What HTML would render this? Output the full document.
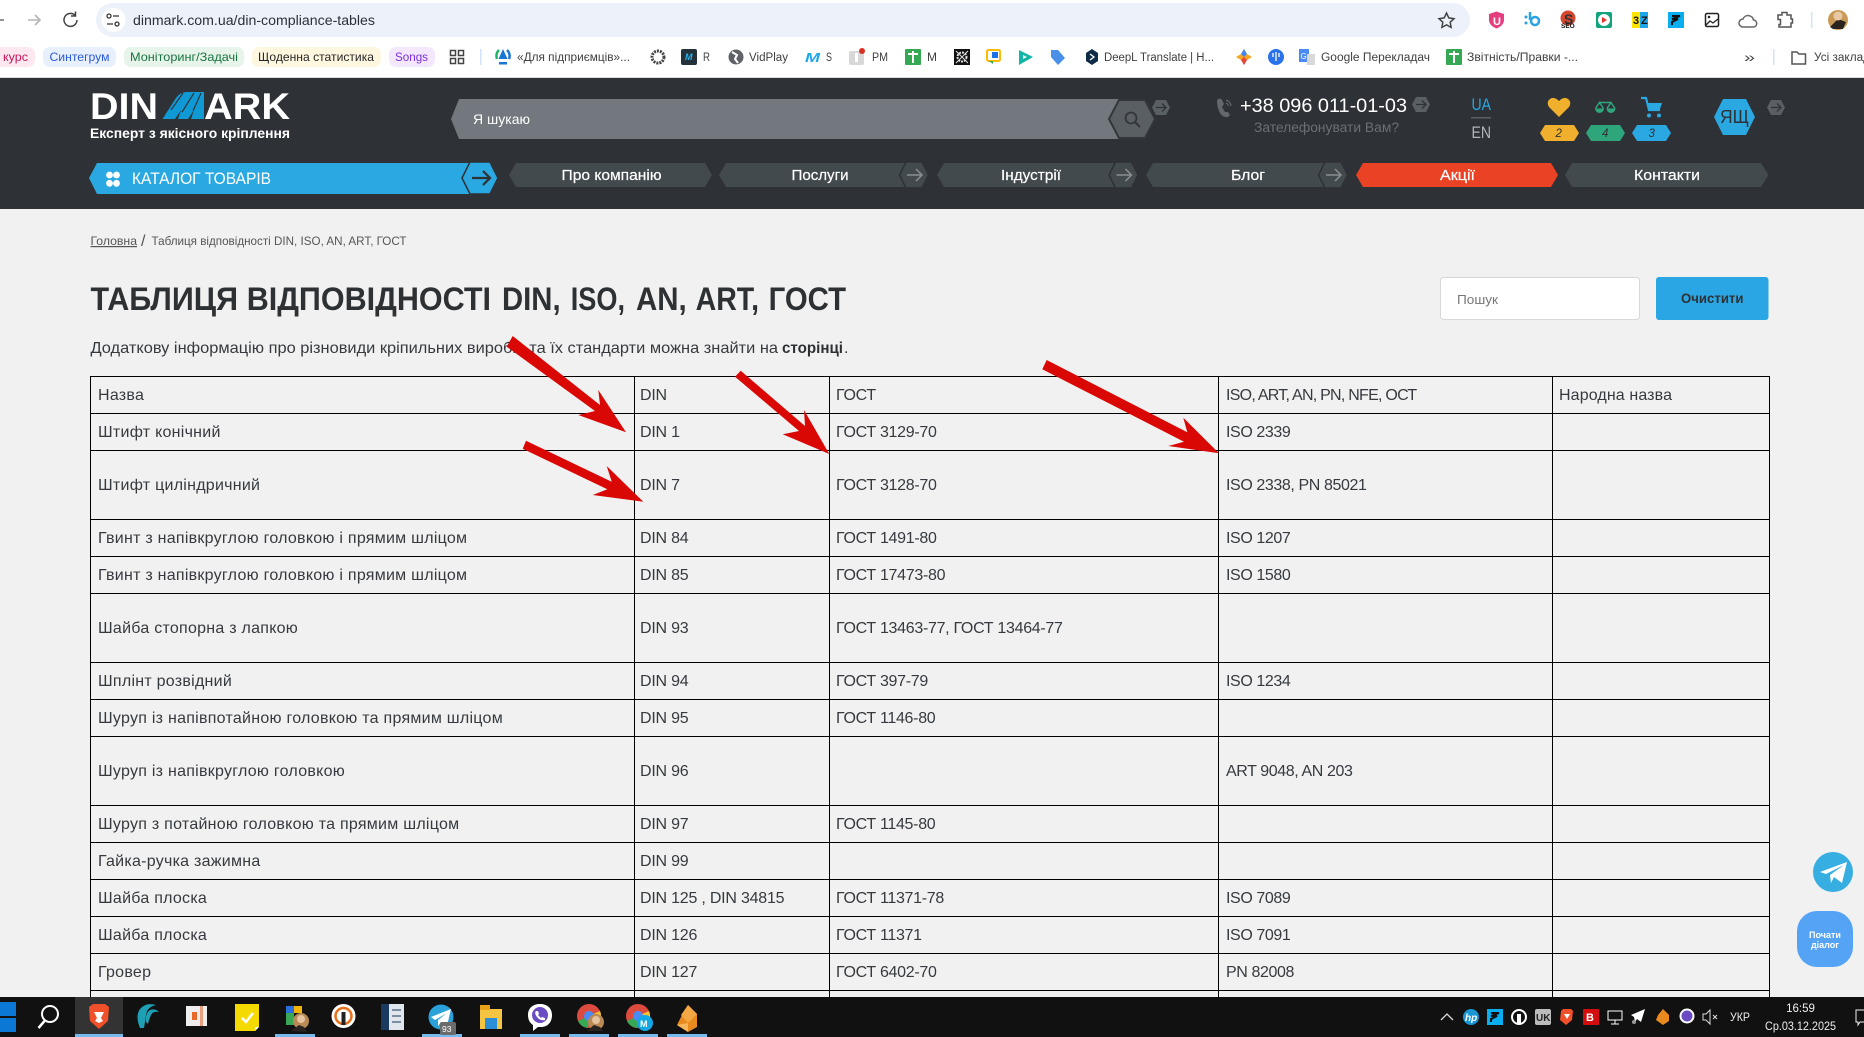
<!DOCTYPE html>
<html lang="uk"><head><meta charset="utf-8"><title>DINMARK — Таблиця відповідності</title>
<style>
html,body{margin:0;padding:0;background:#f1f1f1}
body{width:1864px;height:1037px;overflow:hidden;position:relative;font-family:"Liberation Sans","Noto Sans CJK SC",sans-serif}
svg text{font-family:"Liberation Sans","Noto Sans CJK SC",sans-serif}
#top{position:absolute;left:0;top:0;z-index:1}
#ov{position:absolute;left:0;top:0;z-index:5;pointer-events:none}
table{position:absolute;left:90px;top:376px;width:1679px;border-collapse:collapse;table-layout:fixed;z-index:2;color:#363a3f;font-size:16px}
td{border:1px solid #000;padding:1px 0 0 7px;vertical-align:middle;white-space:nowrap;overflow:hidden}
td:nth-child(1){letter-spacing:.26px}
td:nth-child(2){letter-spacing:-.22px;padding-left:5px}
td:nth-child(3){letter-spacing:-.3px;padding-left:6px}
td:nth-child(4){letter-spacing:-.4px}
td:nth-child(5){letter-spacing:.12px;padding-left:6px}
tr:first-child td:nth-child(4){letter-spacing:-.75px}
tr{height:37px}tr.t{height:69px}
</style></head><body>
<svg id="top" width="1864" height="1037" viewBox="0 0 1864 1037">
<rect width="1864" height="1037" fill="#f1f1f1"/>
<rect width="1864" height="78" fill="#fff"/>
<rect y="77" width="1864" height="1" fill="#dcdcdc"/>
<rect y="78" width="1864" height="131" fill="#2e3135"/>
<!-- toolbar -->
<path d="M0 20H4" stroke="#777" stroke-width="1.6"/>
<path d="M28 20H40M35 15l5 5-5 5" stroke="#b5b5b5" stroke-width="1.6" fill="none"/>
<path d="M77 20a6.500 6.500 0 1 1-2-4.800M75.500 11.500v4.500h-4.500" stroke="#444" stroke-width="1.500" fill="none"/>
<rect x="96" y="3" width="1374" height="34" rx="17" fill="#edf2fa"/>
<circle cx="113.500" cy="20" r="12" fill="#fff"/>
<circle cx="109" cy="16" r="2" fill="none" stroke="#333" stroke-width="1.300"/><path d="M113 16h6M107 24h6" stroke="#333" stroke-width="1.300"/><circle cx="117" cy="24" r="2" fill="none" stroke="#333" stroke-width="1.300"/>
<text x="133" y="25" font-size="13.500" fill="#2d3136" textLength="242" lengthAdjust="spacingAndGlyphs">dinmark.com.ua/din-compliance-tables</text>
<path d="M1446.500 13l2.300 4.900 5.200.700-3.800 3.600.900 5.200-4.600-2.500-4.600 2.500.900-5.200-3.800-3.600 5.200-.700z" fill="none" stroke="#444" stroke-width="1.500"/>
<path d="M1489 14l7.500-2.500 7.500 2.500v6c0 4-3.500 7-7.500 8.500-4-1.500-7.500-4.500-7.500-8.500z" fill="#e4407f"/><text x="1493" y="25" font-size="11" font-weight="700" fill="#fff">U</text>
<circle cx="1526" cy="17" r="1.500" fill="#2aa3e0"/><circle cx="1526" cy="23" r="1.500" fill="#2aa3e0"/><path d="M1530 12v8" stroke="#2aa3e0" stroke-width="2.500"/><circle cx="1535" cy="21" r="4" fill="none" stroke="#2aa3e0" stroke-width="2.500"/>
<circle cx="1568" cy="18" r="7.500" fill="#d5462f"/><text x="1564" y="24" font-size="14" font-weight="700" fill="#333">S</text><text x="1561" y="28" font-size="6.500" font-weight="700" fill="#111">SEO</text>
<rect x="1596" y="12" width="16" height="16" rx="2" fill="#12a37e"/><circle cx="1604" cy="20" r="6" fill="#fff"/><path d="M1602 17l5 3-5 3z" fill="#e3342b"/>
<rect x="1632" y="12" width="8" height="16" fill="#ffe500"/><rect x="1640" y="12" width="8" height="16" fill="#1ca8e8"/><text x="1633" y="24" font-size="11" font-weight="700" fill="#111">3</text><text x="1641" y="24" font-size="11" font-weight="700" fill="#111">Z</text>
<rect x="1668" y="12" width="16" height="16" fill="#08aef0"/><path d="M1672 16h8l-8 3h6l-6 3v3" stroke="#111" stroke-width="2" fill="none"/>
<rect x="1705.500" y="13.500" width="13" height="13" rx="1.500" fill="none" stroke="#222" stroke-width="1.500"/><circle cx="1709" cy="17" r="1.300" fill="#222"/><path d="M1706 25l4-4 3 2 5-4" stroke="#222" fill="none" stroke-width="1.300"/>
<path d="M1743 27h10a3.500 3.500 0 0 0 .5-7 5.500 5.500 0 0 0-10.500-1 4 4 0 0 0 0 8z" fill="none" stroke="#666" stroke-width="1.500"/>
<path d="M1778 15h4v-2.500h5v2.500h4v4h1.500v4h-1.500v4h-12v-2.500h1.500v-5h-2.500z" fill="none" stroke="#555" stroke-width="1.500"/>
<rect x="1811" y="12" width="1.500" height="16" fill="#d3e3fd"/>
<circle cx="1838" cy="20" r="10" fill="#c89a55"/><path d="M1830 27l8-8 8 3-3 7h-10z" fill="#2a2420"/><circle cx="1838" cy="16" r="4.500" fill="#e9c8a6"/>
<!-- bookmarks -->
<g font-size="12">
<rect x="-8" y="47" width="43" height="20" rx="7" fill="#fde8f0"/><text x="3" y="61" fill="#c2185b" textLength="25" lengthAdjust="spacingAndGlyphs">курс</text>
<rect x="43" y="47" width="73" height="20" rx="7" fill="#e8f0fe"/><text x="49.500" y="61" fill="#2a5bd7" textLength="60" lengthAdjust="spacingAndGlyphs">Синтегрум</text>
<rect x="124" y="47" width="120" height="20" rx="7" fill="#e6f4ea"/><text x="130" y="61" fill="#1a7340" textLength="108" lengthAdjust="spacingAndGlyphs">Моніторинг/Задачі</text>
<rect x="252" y="47" width="129" height="20" rx="7" fill="#fef7e0"/><text x="258" y="61" fill="#262626" textLength="116" lengthAdjust="spacingAndGlyphs">Щоденна статистика</text>
<rect x="389" y="47" width="46" height="20" rx="7" fill="#f3e8fd"/><text x="395" y="61" fill="#7b30d8" textLength="33" lengthAdjust="spacingAndGlyphs">Songs</text>
<g fill="none" stroke="#444" stroke-width="1.500"><rect x="450.500" y="50.500" width="5" height="5"/><rect x="458.500" y="50.500" width="5" height="5"/><rect x="450.500" y="58.500" width="5" height="5"/><rect x="458.500" y="58.500" width="5" height="5"/></g>
<rect x="480" y="49" width="1.500" height="16" fill="#d3e3fd"/>
<path d="M499 50a8 8 0 0 0-2 9" stroke="#21b36b" stroke-width="2.500" fill="none"/><path d="M507 50a8 8 0 0 1 2 9" stroke="#1976d2" stroke-width="2.500" fill="none"/><path d="M503 49l4.500 10h-9z" fill="#1976d2"/><rect x="499" y="62" width="8" height="2.500" fill="#1976d2"/>
<g fill="#3f3f3f" font-size="11.500">
<text x="517" y="61" textLength="113" lengthAdjust="spacingAndGlyphs">«Для підприємців»...</text>
<circle cx="658" cy="57" r="6" fill="none" stroke="#444" stroke-width="3" stroke-dasharray="2 1"/>
<rect x="681" y="49" width="16" height="16" rx="2" fill="#24303a"/><text x="685" y="60" font-size="9" fill="#2ab4e8" font-weight="700" font-style="italic">M</text>
<text x="703" y="61" textLength="7" lengthAdjust="spacingAndGlyphs">R</text>
<circle cx="736" cy="57" r="7.500" fill="#5f6368"/><path d="M732 52l5 3-2 4 3 4" stroke="#fff" stroke-width="2" fill="none"/>
<text x="749" y="61" textLength="39" lengthAdjust="spacingAndGlyphs">VidPlay</text>
<text x="805" y="62" font-size="13" fill="#1ea7e4" font-weight="700" font-style="italic" textLength="15" lengthAdjust="spacingAndGlyphs">M</text>
<text x="826" y="61" textLength="6" lengthAdjust="spacingAndGlyphs">S</text>
<rect x="849" y="51" width="15" height="14" rx="2" fill="#d8d8d8"/><rect x="855" y="53" width="3" height="9" fill="#fff"/><circle cx="862" cy="51" r="3" fill="#d93025"/>
<text x="872" y="61" textLength="16" lengthAdjust="spacingAndGlyphs">PM</text>
<rect x="905" y="49" width="16" height="16" rx="1" fill="#34a853"/><path d="M913 51v12M908 54h10" stroke="#fff" stroke-width="2"/>
<text x="927" y="61" textLength="10" lengthAdjust="spacingAndGlyphs">M</text>
<rect x="954" y="49" width="16" height="16" fill="#111"/><circle cx="962" cy="57" r="4.500" fill="none" stroke="#ddd" stroke-width="2" stroke-dasharray="2 1"/><path d="M956 51l12 12M968 51l-12 12" stroke="#ddd"/>
<rect x="987" y="50" width="13" height="11" rx="1.500" fill="none" stroke="#fbbc04" stroke-width="2"/><path d="M989 61h4v3z" fill="#34a853"/><rect x="992" y="52" width="6" height="6" fill="#1a73e8"/>
<path d="M1019 50l14 7-14 8z" fill="#13b5a6"/><path d="M1023 55l4 2-4 2z" fill="#fff"/>
<path d="M1051 50h7l7 8-7 7-7-8z" fill="#4a90e8"/>
<path d="M1092 49l6 4v8l-6 4-6-4v-8z" fill="#0f2b46"/><path d="M1090 54l4 3-4 3" stroke="#fff" stroke-width="1.300" fill="none"/>
<text x="1104" y="61" textLength="110" lengthAdjust="spacingAndGlyphs">DeepL Translate | Н...</text>
<path d="M1244 49l3 5 5 3-5 3-3 5-3-5-5-3 5-3z" fill="#f6a623"/><path d="M1244 49l3 5-3 3-3-3z" fill="#4285f4"/><path d="M1244 65l3-5-3-3-3 3z" fill="#e8453c"/>
<circle cx="1276" cy="57" r="8" fill="#2b73ea"/><path d="M1273 53v4M1276 52v9M1279 53v4" stroke="#fff" stroke-width="1.300"/>
<rect x="1299" y="49" width="10" height="13" fill="#4a8af4"/><text x="1300.500" y="59" font-size="8" fill="#fff">G</text><path d="M1307 54h8v11h-8z" fill="#d9d9d9"/>
<text x="1321" y="61" textLength="109" lengthAdjust="spacingAndGlyphs">Google Перекладач</text>
<rect x="1446" y="49" width="16" height="16" rx="1" fill="#34a853"/><path d="M1454 51v12M1449 54h10" stroke="#fff" stroke-width="2"/>
<text x="1467" y="61" textLength="111" lengthAdjust="spacingAndGlyphs">Звітність/Правки -...</text>
<text x="1744" y="62" font-size="14" fill="#444" textLength="11" lengthAdjust="spacingAndGlyphs">»</text>
<rect x="1773" y="49" width="1.500" height="16" fill="#d3e3fd"/>
<path d="M1792 52h5l2 2h6.500v10h-13.500z" fill="none" stroke="#555" stroke-width="1.500"/>
<text x="1814" y="61" textLength="56" lengthAdjust="spacingAndGlyphs">Усі заклад</text>
</g></g>
<!-- logo -->
<g fill="#fff" font-weight="700">
<text x="90" y="119" font-size="37" textLength="68" lengthAdjust="spacingAndGlyphs">DIN</text>
<text x="204" y="119" font-size="37" textLength="86" lengthAdjust="spacingAndGlyphs">ARK</text>
<text x="90" y="138" font-size="14" textLength="200" lengthAdjust="spacingAndGlyphs">Експерт з якісного кріплення</text>
</g>
<path d="M162.500 119L176 98q4-6 11-6h17v27h-13l3-9-6 9h-10l3-9-6 9z" fill="#0f9ad6"/>
<path d="M171 110l12-17M182 112l12-19M193 111l8-18" stroke="#2e3135" stroke-width="1.200" fill="none"/>
<!-- search -->
<polygon points="451,119 459,99 1122,99 1122,139 459,139" fill="#72787e"/>
<text x="473" y="124" font-size="14" fill="#fff" textLength="57" lengthAdjust="spacingAndGlyphs">Я шукаю</text>
<polygon points="1109,119 1119,100 1145,100 1155,119 1145,138 1119,138" fill="#5a5f63" stroke="#33363a" stroke-width="2"/>
<circle cx="1131" cy="118" r="5.500" fill="none" stroke="#33363a" stroke-width="1.800"/><path d="M1135 122l5 5" stroke="#33363a" stroke-width="2"/>
<polygon points="1152,107.500 1156,100 1166,100 1170,107.500 1166,115 1156,115" fill="#5a5f63"/><path d="M1156 107.500h10M1162 103.500l4 4-4 4" stroke="#2e3135" stroke-width="1.300" fill="none"/>
<!-- phone -->
<path d="M1217 100q3-3 5 0l2 4-2 3 3 5 3 0 2 3-2 2q-5 1-8-4t-3-13z" fill="#62686c"/><path d="M1226 100a7 7 0 0 1 5 6M1226 103a4 4 0 0 1 2.500 3" stroke="#62686c" stroke-width="1.200" fill="none"/>
<text x="1240" y="112" font-size="19.500" fill="#fff" textLength="167" lengthAdjust="spacingAndGlyphs">+38 096 011-01-03</text>
<polygon points="1412,104.500 1416,97 1426,97 1430,104.500 1426,112 1416,112" fill="#5a5f63"/><path d="M1416 104.500h10M1422 100.500l4 4-4 4" stroke="#2e3135" stroke-width="1.300" fill="none"/>
<text x="1254" y="132" font-size="13.500" fill="#6a7074" textLength="145" lengthAdjust="spacingAndGlyphs">Зателефонувати Вам?</text>
<!-- lang -->
<text x="1471.500" y="110" font-size="17" fill="#2ba6e1" textLength="19.500" lengthAdjust="spacingAndGlyphs">UA</text>
<rect x="1471" y="117" width="20" height="1.500" fill="#5b6064"/>
<text x="1471.500" y="138" font-size="17" fill="#b4b7b9" textLength="19.500" lengthAdjust="spacingAndGlyphs">EN</text>
<!-- fav, compare, cart -->
<path d="M1559 117l-10-10q-3-5 1-8t9 2q5-5 9-2t1 8z" fill="#f0af2c"/>
<polygon points="1540,133 1545,125 1574,125 1579,133 1574,141 1545,141" fill="#f0af2c"/>
<text x="1555.500" y="137" font-size="11.500" font-style="italic" fill="#2e3135">2</text>
<path d="M1595.500 108.500l4-6 4 6M1607 108.500l4-6 4 6M1599.500 102.500h11.500" stroke="#2fa57c" stroke-width="1.500" fill="none"/>
<path d="M1595 108.500h9a4.500 4.500 0 0 1-9 0zM1606.500 108.500h9a4.500 4.500 0 0 1-9 0z" fill="#2fa57c"/>
<polygon points="1586,133 1591,125 1620,125 1625,133 1620,141 1591,141" fill="#2fa57c"/>
<text x="1602" y="137" font-size="11.500" font-style="italic" fill="#2e3135">4</text>
<path d="M1641 98h5l3 12h11" stroke="#2aa8e2" stroke-width="2.200" fill="none"/><path d="M1647 103h15l-2 6h-11z" fill="#2aa8e2"/><circle cx="1649" cy="115.500" r="2" fill="#2aa8e2"/><circle cx="1659" cy="115.500" r="2" fill="#2aa8e2"/>
<polygon points="1632,133 1637,125 1666,125 1671,133 1666,141 1637,141" fill="#2aa8e2"/>
<text x="1648.500" y="137" font-size="11.500" font-style="italic" fill="#2e3135">3</text>
<polygon points="1714,117 1723,99 1746,99 1755,117 1746,135 1723,135" fill="#2aa8e2"/>
<text x="1720" y="123" font-size="18" fill="#2e3135" textLength="29" lengthAdjust="spacingAndGlyphs">ЯЩ</text>
<polygon points="1767,107.500 1771,100 1781,100 1785,107.500 1781,115 1771,115" fill="#5a5f63"/><path d="M1771 107.500h10M1777 103.500l4 4-4 4" stroke="#2e3135" stroke-width="1.300" fill="none"/>
<!-- catalog -->
<polygon points="89,178 97,163 470,163 470,194 97,194" fill="#2aa8e2"/>
<circle cx="109.500" cy="175" r="3.400" fill="#fff"/><circle cx="116.500" cy="175" r="3.400" fill="#fff"/><circle cx="109.500" cy="183.300" r="3.400" fill="#fff"/><circle cx="116.500" cy="183.300" r="3.400" fill="#fff"/>
<text x="132" y="184" font-size="16.500" fill="#fff" textLength="139" lengthAdjust="spacingAndGlyphs">КАТАЛОГ ТОВАРІВ</text>
<polygon points="462,178 470,162 490,162 498,178 490,194 470,194" fill="#2aa8e2" stroke="#2e3135" stroke-width="1.500"/>
<path d="M472 178h18M483 171l7 7-7 7" stroke="#2e3135" stroke-width="2.200" fill="none"/>
<!-- nav -->
<g font-size="14.500" fill="#fff" font-weight="400" text-anchor="middle" stroke="#fff" stroke-width=".2">
<polygon points="509,175 516,163 705,163 712,175 705,187 516,187" fill="#434a4e" stroke="none"/>
<text x="611.500" y="180" textLength="100" lengthAdjust="spacingAndGlyphs">Про компанію</text>
<polygon points="719,175 726,163 906,163 906,187 726,187" fill="#434a4e" stroke="none"/>
<text x="820" y="180" textLength="57" lengthAdjust="spacingAndGlyphs">Послуги</text>
<polygon points="937,175 944,163 1116,163 1116,187 944,187" fill="#434a4e" stroke="none"/>
<text x="1031" y="180" textLength="60" lengthAdjust="spacingAndGlyphs">Індустрії</text>
<polygon points="1146,175 1153,163 1324,163 1324,187 1153,187" fill="#434a4e" stroke="none"/>
<text x="1248" y="180" textLength="34" lengthAdjust="spacingAndGlyphs">Блог</text>
<polygon points="1356,175 1363,163 1551,163 1558,175 1551,187 1363,187" fill="#e94224" stroke="none"/>
<text x="1457.500" y="180" textLength="35" lengthAdjust="spacingAndGlyphs">Акції</text>
<polygon points="1565,175 1572,163 1761,163 1768.500,175 1761,187 1572,187" fill="#434a4e" stroke="none"/>
<text x="1667" y="180" textLength="66" lengthAdjust="spacingAndGlyphs">Контакти</text>
</g>
<g fill="#434a4e" stroke="#2e3135" stroke-width="1.500">
<polygon points="899.500,175 906,162 922,162 928.500,175 922,188 906,188"/>
<polygon points="1109,175 1115.500,162 1131.500,162 1138,175 1131.500,188 1115.500,188"/>
<polygon points="1318.500,175 1325,162 1341,162 1347.500,175 1341,188 1325,188"/>
</g>
<g stroke="#8a8e91" stroke-width="1.500" fill="none">
<path d="M907 175h14M916 169l6 6-6 6"/><path d="M1116.500 175h14M1125.500 169l6 6-6 6"/><path d="M1326 175h14M1335 169l6 6-6 6"/>
</g>
<!-- breadcrumb -->
<text x="90.500" y="245" font-size="12" fill="#555" textLength="46.500" lengthAdjust="spacingAndGlyphs" text-decoration="underline">Головна</text>
<text x="141" y="246" font-size="16" fill="#555">/</text>
<text x="151.500" y="245" font-size="12" fill="#555" textLength="255" lengthAdjust="spacingAndGlyphs">Таблиця відповідності DIN, ISO, AN, ART, ГОСТ</text>
<!-- title -->
<g font-size="32" font-weight="700" fill="#2e3134">
<text x="90.500" y="310" textLength="147.500" lengthAdjust="spacingAndGlyphs">ТАБЛИЦЯ</text>
<text x="246.700" y="310" textLength="244.300" lengthAdjust="spacingAndGlyphs">ВІДПОВІДНОСТІ</text>
<text x="502" y="310" textLength="58.600" lengthAdjust="spacingAndGlyphs">DIN,</text>
<text x="570.700" y="310" textLength="54.300" lengthAdjust="spacingAndGlyphs">ISO,</text>
<text x="636" y="310" textLength="50.700" lengthAdjust="spacingAndGlyphs">AN,</text>
<text x="695.600" y="310" textLength="63.400" lengthAdjust="spacingAndGlyphs">ART,</text>
<text x="768.600" y="310" textLength="77.400" lengthAdjust="spacingAndGlyphs">ГОСТ</text>
</g>
<text x="90.500" y="353" font-size="16" fill="#363a3f" textLength="687.500" lengthAdjust="spacingAndGlyphs">Додаткову інформацію про різновиди кріпильних виробів та їх стандарти можна знайти на</text>
<text x="782" y="353" font-size="16" font-weight="700" fill="#2e3134" textLength="61" lengthAdjust="spacingAndGlyphs">сторінці</text>
<text x="844" y="353" font-size="16" fill="#363a3f">.</text>
<!-- search box -->
<rect x="1440.500" y="277.500" width="199" height="42" rx="3" fill="#fff" stroke="#d8d8d8"/>
<text x="1457" y="304" font-size="13" fill="#777" textLength="41" lengthAdjust="spacingAndGlyphs">Пошук</text>
<rect x="1656" y="277" width="112.500" height="43" rx="3" fill="#2ba6e4"/>
<text x="1681" y="303" font-size="13.500" font-weight="700" fill="#2e3134" textLength="62.500" lengthAdjust="spacingAndGlyphs">Очистити</text>
</svg>

<table>
<colgroup><col style="width:544px"><col style="width:195px"><col style="width:389px"><col style="width:334px"><col style="width:217px"></colgroup>
<tr><td>Назва</td><td>DIN</td><td>ГОСТ</td><td>ISO, ART, AN, PN, NFE, ОСТ</td><td>Народна назва</td></tr>
<tr><td>Штифт конічний</td><td>DIN 1</td><td>ГОСТ 3129-70</td><td>ISO 2339</td><td></td></tr>
<tr class="t"><td>Штифт циліндричний</td><td>DIN 7</td><td>ГОСТ 3128-70</td><td>ISO 2338, PN 85021</td><td></td></tr>
<tr><td>Гвинт з напівкруглою головкою і прямим шліцом</td><td>DIN 84</td><td>ГОСТ 1491-80</td><td>ISO 1207</td><td></td></tr>
<tr><td>Гвинт з напівкруглою головкою і прямим шліцом</td><td>DIN 85</td><td>ГОСТ 17473-80</td><td>ISO 1580</td><td></td></tr>
<tr class="t"><td>Шайба стопорна з лапкою</td><td>DIN 93</td><td>ГОСТ 13463-77, ГОСТ 13464-77</td><td></td><td></td></tr>
<tr><td>Шплінт розвідний</td><td>DIN 94</td><td>ГОСТ 397-79</td><td>ISO 1234</td><td></td></tr>
<tr><td>Шуруп із напівпотайною головкою та прямим шліцом</td><td>DIN 95</td><td>ГОСТ 1146-80</td><td></td><td></td></tr>
<tr class="t"><td>Шуруп із напівкруглою головкою</td><td>DIN 96</td><td></td><td>ART 9048, AN 203</td><td></td></tr>
<tr><td>Шуруп з потайною головкою та прямим шліцом</td><td>DIN 97</td><td>ГОСТ 1145-80</td><td></td><td></td></tr>
<tr><td>Гайка-ручка зажимна</td><td>DIN 99</td><td></td><td></td><td></td></tr>
<tr><td>Шайба плоска</td><td>DIN 125 , DIN 34815</td><td>ГОСТ 11371-78</td><td>ISO 7089</td><td></td></tr>
<tr><td>Шайба плоска</td><td>DIN 126</td><td>ГОСТ 11371</td><td>ISO 7091</td><td></td></tr>
<tr><td>Гровер</td><td>DIN 127</td><td>ГОСТ 6402-70</td><td>PN 82008</td><td></td></tr>
<tr><td></td><td></td><td></td><td></td><td></td></tr>
</table>

<svg id="ov" width="1864" height="1037" viewBox="0 0 1864 1037">
<!-- red arrows -->
<g fill="#d90805">
<polygon points="512.700,336 600,405 598.300,390 626,432.300 578.300,415 595,411 506.700,346.700"/>
<polygon points="740.700,370.700 805,426 804,410 829.300,454 782.700,434.300 799,431 735,376.700"/>
<polygon points="526,440.700 611.700,481.700 606.700,466 643.300,501.700 592.700,495 607.300,489.300 522.700,448.700"/>
<polygon points="1046.700,360 1187.300,432.300 1183.300,417.700 1219,453.300 1168.300,446 1184,441.700 1042.300,369.300"/>
</g>
<!-- floating -->
<circle cx="1833" cy="872" r="20" fill="#37aee2"/>
<path d="M1820 872l27-10-5 21-8-6-3 6-1-8 14-10-18 9z" fill="#fff"/>
<rect x="1797" y="911" width="56" height="56" rx="20" fill="#54a3f5"/>
<text x="1825" y="938" font-size="9" font-weight="700" fill="#fff" text-anchor="middle">Почати</text>
<text x="1825" y="948" font-size="9" font-weight="700" fill="#fff" text-anchor="middle">діалог</text>
<!-- taskbar -->
<rect y="997" width="1864" height="40" fill="#111"/>
<rect x="0" y="1002" width="16" height="14" fill="#0a78d4"/><rect x="0" y="1018" width="16" height="14" fill="#0a78d4"/>
<circle cx="50" cy="1014" r="8" fill="none" stroke="#fff" stroke-width="2"/><path d="M44.500 1021l-6 7" stroke="#fff" stroke-width="2.500"/>
<rect x="75" y="997" width="48" height="40" fill="#333"/>
<g fill="#76b9ed"><rect x="75" y="1034" width="48" height="3"/><rect x="275" y="1034" width="40" height="3"/><rect x="422" y="1034" width="40" height="3"/><rect x="520" y="1034" width="40" height="3"/><rect x="569" y="1034" width="40" height="3"/><rect x="618" y="1034" width="40" height="3"/><rect x="667" y="1034" width="40" height="3"/></g>
<path d="M89 1007l4-3h12l4 3-1 14-9 8-9-8z" fill="#f0502a"/><path d="M94 1012h10l-3 6 2 3-4 2-4-2 2-3z" fill="#fff"/>
<path d="M140 1028q-5-12 0-19 6-7 16-4-9 2-10 10t-2 13zM146 1022q-1-9 4-12 5-2 9 2-6-1-8 3t-3 9z" fill="#1e9fb4"/>
<rect x="186" y="1006" width="21" height="20" fill="#eee"/><rect x="192" y="1012" width="5" height="8" fill="#e8682c"/><rect x="200" y="1006" width="3" height="20" fill="#e8a07c"/>
<path d="M235 1004h24v23l-4 4h-20z" fill="#f4da00"/><path d="M242 1018l4 4 7-9" stroke="#fff" stroke-width="2.500" fill="none"/><path d="M255 1031l4-4h-4z" fill="#fff"/>
<rect x="286" y="1006" width="16" height="7" fill="#2a6fdb"/><rect x="286" y="1013" width="8" height="12" fill="#3aa757"/><rect x="294" y="1006" width="8" height="7" fill="#f5b400"/><circle cx="301" cy="1021" r="8" fill="#b98a55"/><circle cx="301" cy="1019" r="4" fill="#e5c39e"/><path d="M291 1031l8-6 5 2 3 5z" fill="#2a2420"/>
<circle cx="343.500" cy="1016" r="12" fill="#fff"/><circle cx="343.500" cy="1016" r="8" fill="none" stroke="#e8701a" stroke-width="2.500"/><rect x="341.500" y="1012" width="4" height="13" fill="#222"/>
<rect x="381" y="1004" width="23" height="26" fill="#dfe6ee"/><rect x="381" y="1004" width="8" height="26" fill="#1a3a5f"/><path d="M392 1010h9M392 1016h9M392 1022h9" stroke="#7c8da0" stroke-width="2"/>
<circle cx="441" cy="1017" r="12.500" fill="#2aa1d8"/><path d="M431 1017l20-8-4 17-6-4-3 4v-6l9-7-12 7z" fill="#fff"/><rect x="440" y="1022" width="16" height="13" rx="2" fill="#6b6b6b"/><text x="442" y="1032" font-size="8.500" fill="#fff">93</text>
<rect x="480" y="1009" width="22" height="20" fill="#f5c542"/><rect x="480" y="1005" width="10" height="5" fill="#e8a317"/><rect x="485" y="1018" width="12" height="11" fill="#2a8fd6"/>
<path d="M540 1004c-7 0-12 4-12 11 0 5 2 8 5 10v6l5-4h3c7 0 11-5 11-12s-5-11-12-11z" fill="#fff"/><circle cx="540" cy="1015" r="8" fill="#6a4bc4"/><path d="M536 1011l2 0 1 3-1 1 3 3 1-1 3 1v2q-5 1-8-3t-1-6z" fill="#fff"/>
<circle cx="589" cy="1016" r="12" fill="#dd4b3e"/><path d="M589 1016l-11 5a12 12 0 0 0 10 7z" fill="#37a853"/><path d="M589 1016l11-5a12 12 0 0 1-6 16z" fill="#f5c22e"/><circle cx="589" cy="1016" r="5" fill="#4b8bf5"/><circle cx="596" cy="1022" r="8" fill="#b98a55"/><circle cx="596" cy="1020" r="4" fill="#e5c39e"/><path d="M587 1031l7-6 6 2 3 4z" fill="#2a2420"/>
<circle cx="638" cy="1016" r="12" fill="#dd4b3e"/><path d="M638 1016l-11 5a12 12 0 0 0 10 7z" fill="#37a853"/><path d="M638 1016l11-5a12 12 0 0 1-6 16z" fill="#f5c22e"/><circle cx="638" cy="1016" r="5" fill="#4b8bf5"/><circle cx="645" cy="1023" r="8" fill="#13a7e6"/><text x="640" y="1027" font-size="9" font-weight="700" fill="#fff">M</text>
<path d="M688 1005l9 9v13l-9 5-11-7 4-8z" fill="#e98a1e"/><path d="M688 1005l9 9-9 9-7-8z" fill="#f4a742"/><path d="M677 1025l11-2v9z" fill="#f7b75d"/>
<!-- tray -->
<path d="M1441 1020l6-6 6 6" stroke="#ddd" stroke-width="1.300" fill="none"/>
<circle cx="1471" cy="1017" r="8" fill="#1a96d4"/><text x="1465" y="1021" font-size="10" font-style="italic" font-weight="700" fill="#fff">hp</text>
<rect x="1487" y="1009" width="16" height="16" fill="#08aef0"/><path d="M1491 1013h8l-8 3h6l-6 3v3" stroke="#111" stroke-width="2" fill="none"/>
<circle cx="1519" cy="1017" r="7" fill="none" stroke="#fff" stroke-width="2"/><rect x="1517" y="1014" width="4" height="10" fill="#fff"/>
<rect x="1535" y="1009" width="16" height="16" rx="2" fill="#bcbcbc"/><text x="1536" y="1021" font-size="10" font-weight="700" fill="#222">UK</text>
<path d="M1561 1011l2-2h8l2 2-1 9-6 5-6-5z" fill="#f0502a"/><path d="M1564 1014h6l-3 5z" fill="#fff"/>
<rect x="1583" y="1009" width="16" height="16" rx="1" fill="#d30d0d"/><text x="1586" y="1021" font-size="11" font-weight="700" fill="#fff">B</text>
<rect x="1608" y="1011" width="14" height="9" fill="none" stroke="#fff"/><path d="M1615 1020v4M1611 1024h8" stroke="#fff"/>
<path d="M1631 1015l14-6-4 13-4-3-2 3-1-5z" fill="#fff"/><circle cx="1634" cy="1022" r="2" fill="#999"/>
<path d="M1663 1009l6 6v6l-6 4-7-5 2-5z" fill="#e98a1e"/>
<circle cx="1687" cy="1016" r="7.500" fill="#fff"/><circle cx="1687" cy="1016" r="5.500" fill="#6a4bc4"/>
<path d="M1703 1014h3l4-4v14l-4-4h-3zM1713 1015l4 4M1717 1015l-4 4" stroke="#ddd" fill="none"/>
<text x="1730" y="1021" font-size="11.500" fill="#eee" textLength="20" lengthAdjust="spacingAndGlyphs">УКР</text>
<text x="1800.500" y="1012" font-size="11.500" fill="#eee" text-anchor="middle">16:59</text>
<text x="1800.500" y="1030" font-size="11.500" fill="#eee" text-anchor="middle" textLength="71" lengthAdjust="spacingAndGlyphs">Ср.03.12.2025</text>
<path d="M1856 1010h10v12h-6l-2 3v-3h-2z" fill="none" stroke="#eee"/>
</svg>
</body></html>
